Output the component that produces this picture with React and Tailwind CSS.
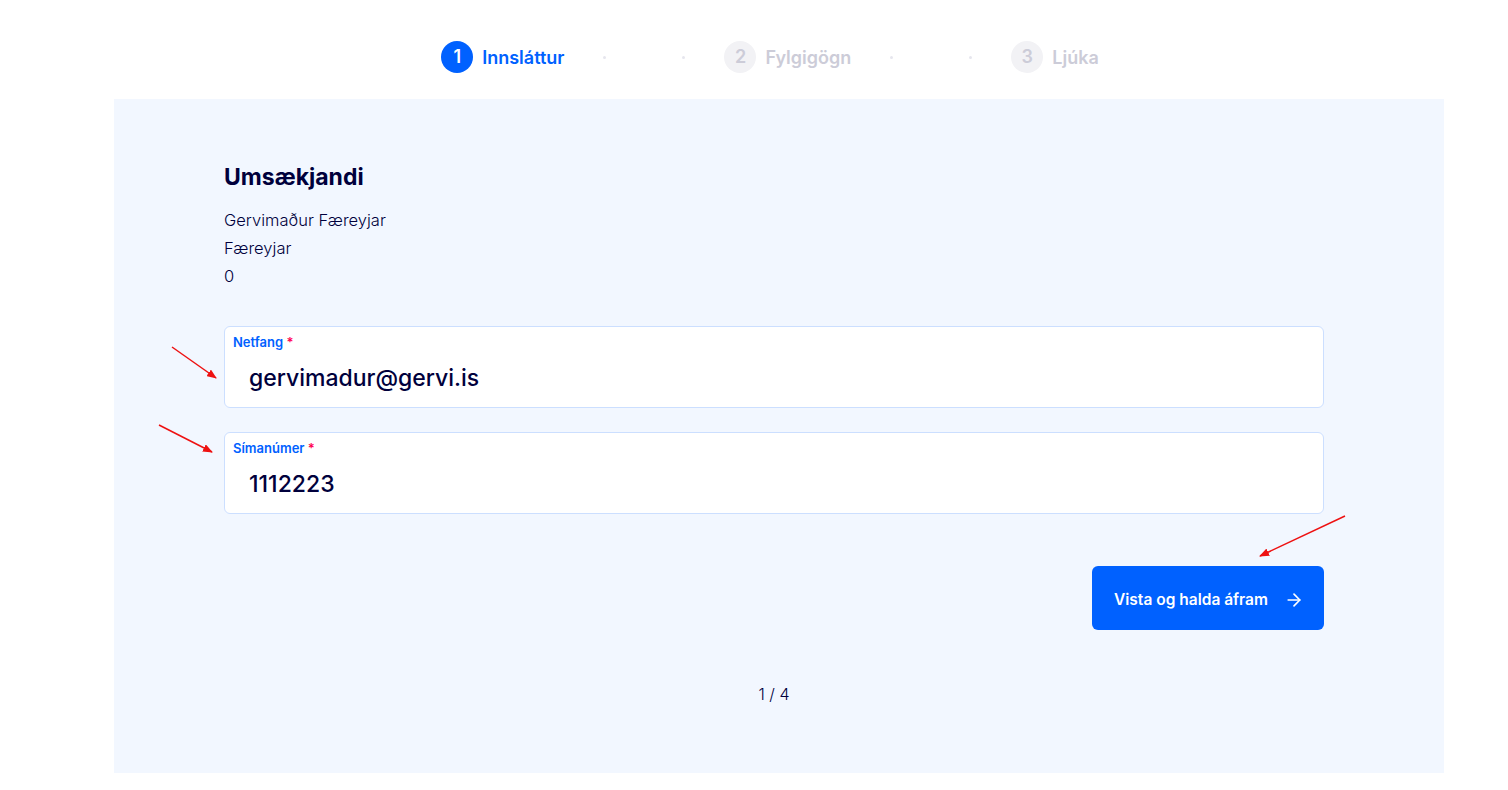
import React from 'react';
import { ArrowRight } from 'lucide-react';

const Step = ({ n, label, active }) => (
    <div className="flex items-center gap-[9px]">
        <div
            className={
                active
                    ? 'w-8 h-8 rounded-full bg-[#0061ff] text-white flex items-center justify-center text-lg font-semibold'
                    : 'w-8 h-8 rounded-full bg-[#f2f2f5] text-[#ccccd8] flex items-center justify-center text-lg font-semibold'
            }
        >
            {n}
        </div>
        <span className={active ? 'text-[18px] font-semibold text-[#0061ff]' : 'text-[18px] font-semibold text-[#ccccd8]'}>
            {label}
        </span>
    </div>
);

const Dots = () => (
    <div className="h-8 flex items-center gap-[76px] px-[39px]">
        <span className="w-[3px] h-[3px] rounded-full bg-[#e6e6ee]" />
        <span className="w-[3px] h-[3px] rounded-full bg-[#e6e6ee]" />
    </div>
);

const Field = ({ label, value }) => (
    <div className="bg-white border border-[#ccdfff] rounded-md h-[82px] pl-2 pt-[7px]">
        <div className="text-[13px] font-semibold text-[#0061ff] leading-4">
            {label} <span className="text-[#ff0050]">*</span>
        </div>
        <div className="pl-4 pt-[14px] text-[23px] font-medium text-[#00003c] leading-7">{value}</div>
    </div>
);

const App = () => {
    return (
        <div className="relative min-h-screen bg-white font-['Inter',sans-serif]">
            <div className="h-[99px] flex items-start justify-center pt-[41px] pl-[32px]">
                <Step n="1" label="Innsláttur" active />
                <Dots />
                <Step n="2" label="Fylgigögn" />
                <Dots />
                <Step n="3" label="Ljúka" />
            </div>

            <div className="mx-[114px] w-[1330px] h-[674px] bg-[#f2f7ff] pl-[110px] pr-[120px] pt-[62px]">
                <h2 className="text-[23px] font-bold text-[#00003c] leading-8">Umsækjandi</h2>
                <div className="mt-[13px] text-[16.5px] text-[#00003c] leading-7 font-light">
                    <div>Gervimaður Færeyjar</div>
                    <div>Færeyjar</div>
                    <div>0</div>
                </div>

                <div className="mt-[36px] flex flex-col gap-6">
                    <Field label="Netfang" value="gervimadur@gervi.is" />
                    <Field label="Símanúmer" value="1112223" />
                </div>

                <div className="mt-[52px] flex justify-end">
                    <button className="w-[232px] h-[64px] rounded-md bg-[#0061ff] text-white font-semibold text-[15.5px] flex items-center justify-center gap-4 pt-[4px] pl-[2px]">
                        Vista og halda áfram
                        <ArrowRight size={20} strokeWidth={2} />
                    </button>
                </div>

                <div className="mt-[52px] text-center text-base font-light text-[#00003c]">1 / 4</div>
            </div>

            <svg className="absolute inset-0 pointer-events-none" width="1508" height="790">
                <defs>
                    <marker id="ah" markerWidth="10" markerHeight="8" refX="9" refY="4" orient="auto" markerUnits="userSpaceOnUse">
                        <path d="M0 0 L10 4 L0 8 Z" fill="#ee1111" />
                    </marker>
                </defs>
                <line x1="172" y1="347" x2="216" y2="378" stroke="#ee1111" strokeWidth="1.5" markerEnd="url(#ah)" />
                <line x1="159" y1="425" x2="212" y2="452" stroke="#ee1111" strokeWidth="1.5" markerEnd="url(#ah)" />
                <line x1="1345" y1="516" x2="1260" y2="556" stroke="#ee1111" strokeWidth="1.5" markerEnd="url(#ah)" />
            </svg>
        </div>
    );
};

export default App;
